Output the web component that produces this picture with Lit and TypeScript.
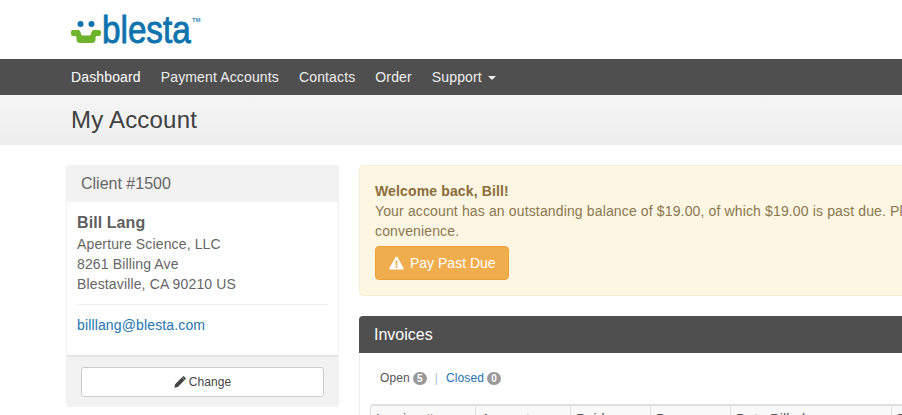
import { LitElement, html, css } from "lit";
import { customElement } from "lit/decorators.js";

@customElement("app-root")
export class AppRoot extends LitElement {
  static styles = css`
    :host {
      display: block;
      width: 902px;
      height: 415px;
      overflow: hidden;
      background: #fff;
      font-family: "Liberation Sans", Arial, sans-serif;
      font-size: 14px;
      line-height: 20px;
      letter-spacing: 0.14px;
      color: #666;
    }
    * { box-sizing: border-box; }
    a { color: #2474b0; text-decoration: none; }
    .top { height: 59px; padding: 20px 0 0 71px; }
    .logo { display: flex; align-items: flex-start; width: 130px; height: 36px; }
    .logo-word {
      font-size: 38px; line-height: 36px; color: #0f73ad; font-weight: 400; letter-spacing: 0;
      margin: -8px -11.500px 0 0; transform: scaleX(0.875); transform-origin: left top; -webkit-text-stroke: 0.9px #0f73ad;
    }
    .logo-tm { font-size: 6px; line-height: 6px; color: #3a8fc0; margin: -3px 0 0 0; font-weight: 700; letter-spacing: 0; }
    nav { height: 36px; background: #4f4f4f; display: flex; gap: 20px; padding-left: 71px; align-items: center; color: #eee; }
    nav .active { color: #fff; }
    .caret {
      display: inline-block; width: 0; height: 0; margin-left: 2px; vertical-align: middle;
      border-top: 4px solid #eee; border-left: 4px solid transparent; border-right: 4px solid transparent;
    }
    .title { height: 50px; background: linear-gradient(#f5f5f5, #eeeeee); padding-left: 71px; display: flex; align-items: center; }
    .title h1 { margin: 0; font-size: 24px; font-weight: 400; line-height: 50px; color: #404040; letter-spacing: 0.2px; }
    .main { display: flex; gap: 20px; padding: 20px 0 0 66px; width: 1300px; }
    .side { width: 273px; flex: none; height: 242px; background: #f2f2f2; border-radius: 4px; overflow: hidden; }
    .side-head { height: 37px; padding: 0 15px; font-size: 16px; line-height: 37px; color: #666; letter-spacing: 0; }
    .side-body {
      background: #fff; height: 155px; margin: 0 1px; padding: 11px 10px 0; border-bottom: 2px solid #e3e3e3;
    }
    .side-body strong { display: block; font-size: 16px; color: #5f5f5f; line-height: 20px; margin-bottom: 1px; letter-spacing: 0.08px; }
    .side-body hr { border: 0; border-top: 1px solid #eee; margin: 10px 0 10px; }
    .side-foot { padding: 10px 15px 0; }
    .btn-change {
      height: 30px; background: #fff; border: 1px solid #ccc; border-radius: 3px; font-size: 12px; color: #444;
      display: flex; align-items: center; justify-content: center; gap: 3px; line-height: 18px; letter-spacing: 0.1px;
    }
    .content { width: 900px; flex: none; }
    .alert {
      height: 131px; background: #fcf6e3; border: 1px solid #f7efd4; border-radius: 4px; padding: 15px; color: #8a6d3b;
      white-space: nowrap;
    }
    .alert strong { color: #8a6d3b; display: block; }
    .alert p { margin: 0; color: #8a7650; }
    .btn-pay {
      display: inline-flex; align-items: center; gap: 6px; height: 34px; margin-top: 5px; padding: 0 12px 0 13px;
      background: #f0ad4e; border: 1px solid #eea236; border-radius: 4px; color: #fff; font-size: 14px; letter-spacing: 0;
    }
    .panel { margin-top: 20px; }
    .panel-head { height: 37px; background: #4f4f4f; color: #fff; font-size: 16px; line-height: 37px; padding: 0 15px; border-radius: 4px 4px 0 0; letter-spacing: 0; }
    .panel-body { border-left: 1px solid #eee; padding: 15px 10px 0; }
    .tabs { display: flex; align-items: center; height: 20px; padding-left: 10px; font-size: 12px; color: #555; letter-spacing: 0.1px; }
    .badge {
      display: inline-block; min-width: 14px; height: 13px; padding: 0 3px; margin-left: 3px; border-radius: 7px;
      background: #999; color: #fff; font-size: 10px; font-weight: 700; line-height: 13px; text-align: center; vertical-align: middle; letter-spacing: 0;
    }
    .sep { margin: 0 8px; color: #a9bfd0; }
    table { border-collapse: separate; border-spacing: 0; margin-top: 16px; table-layout: fixed; width: 623px; }
    th {
      height: 30px; background: #f9f9f9; border: 0 solid #e0e0e0; border-top-width: 2px; border-right-width: 1px;
      font-weight: 400; text-align: left; padding: 3px 5px 0; color: #555; white-space: nowrap; vertical-align: top;
    }
    th:first-child { border-left-width: 1px; border-top-left-radius: 3px; }
  `;

  render() {
    return html`
      <div class="top">
        <div class="logo">
          <svg width="31" height="24" viewBox="0 0 31 24">
            <circle cx="9.500" cy="4" r="3" fill="#0f73ad"></circle>
            <circle cx="20.500" cy="4" r="3" fill="#0f73ad"></circle>
            <path d="M1.500 10H7Q9 10 9.500 12L10 14Q10.500 15.500 12 15.500H18Q19.500 15.500 20 14L20.500 12Q21 10 23 10H28Q30 10 30 12V14Q30 16 28 16H26Q24.500 16 24.500 17.500V20Q24 23 21 23H9Q6 23 5.500 20V17.500Q5.500 16 4 16H2Q0 16 0 14V12Q0 10 1.500 10Z" fill="#6eb32c"></path>
          </svg>
          <span class="logo-word">blesta</span>
          <span class="logo-tm">TM</span>
        </div>
      </div>
      <nav>
        <span class="active">Dashboard</span>
        <span>Payment Accounts</span>
        <span>Contacts</span>
        <span>Order</span>
        <span>Support <i class="caret"></i></span>
      </nav>
      <div class="title"><h1>My Account</h1></div>
      <div class="main">
        <aside class="side">
          <div class="side-head">Client #1500</div>
          <div class="side-body">
            <strong>Bill Lang</strong>
            Aperture Science, LLC<br />
            8261 Billing Ave<br />
            Blestaville, CA 90210 US
            <hr />
            <a href="#">billlang@blesta.com</a>
          </div>
          <div class="side-foot">
            <div class="btn-change">
              <svg width="12" height="12" viewBox="0 0 11 11"><path d="M0.300 10.700l.7-3.200L7.100 1.400l2.500 2.500-6.100 6.100zM7.900.6c.5-.5 1-.5 1.400-.1l1.200 1.200c.4.4.4.9-.1 1.400l-.6.6-2.500-2.500z" fill="#444"></path></svg>
              Change
            </div>
          </div>
        </aside>
        <section class="content">
          <div class="alert">
            <strong>Welcome back, Bill!</strong>
            <p>Your account has an outstanding balance of $19.00, of which $19.00 is past due. Please pay now for your<br />convenience.</p>
            <span class="btn-pay">
              <svg width="15" height="14" viewBox="0 0 15 14"><path d="M7.500.6c.4 0 .7.2.9.5l6.200 11c.4.7 0 1.400-.8 1.400H1.200c-.8 0-1.200-.7-.8-1.400l6.200-11c.2-.3.5-.5.9-.5z" fill="#fff"></path><rect x="6.600" y="4.500" width="1.800" height="4.800" fill="#f0ad4e"></rect><rect x="6.600" y="10.200" width="1.800" height="1.800" fill="#f0ad4e"></rect></svg>
              Pay Past Due
            </span>
          </div>
          <div class="panel">
            <div class="panel-head">Invoices</div>
            <div class="panel-body">
              <div class="tabs">
                <span>Open<span class="badge">5</span></span>
                <span class="sep">|</span>
                <a href="#">Closed<span class="badge">0</span></a>
              </div>
              <table>
                <colgroup><col style="width:106px" /><col style="width:95px" /><col style="width:80px" /><col style="width:80px" /><col style="width:161px" /><col style="width:101px" /></colgroup>
                <tr><th>Invoice #</th><th>Amount</th><th>Paid</th><th>Due</th><th>Date Billed</th><th>Date Due</th></tr>
              </table>
            </div>
          </div>
        </section>
      </div>
    `;
  }
}
